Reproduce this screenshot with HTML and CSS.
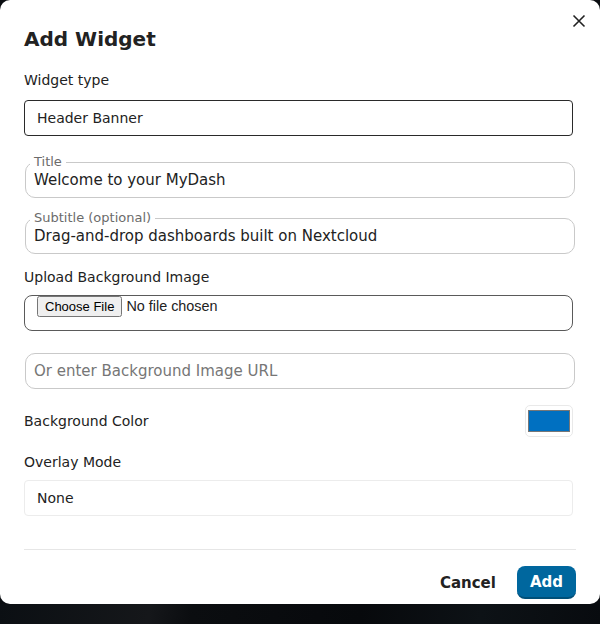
FILE: index.html
```html
<!DOCTYPE html>
<html>
<head>
<meta charset="utf-8">
<link rel="stylesheet" href="styles.css">
</head>
<body>
<div class="dialog">
  <button class="close" aria-label="Close">
    <svg width="14" height="14" viewBox="0 0 14 14"><path d="M1.5 1.5 L12.5 12.5 M12.5 1.5 L1.5 12.5" stroke="#222" stroke-width="1.6" fill="none"/></svg>
  </button>
  <h2 class="title">Add Widget</h2>

  <div class="field first">
    <label class="label">Widget type</label>
    <div class="select dark">Header Banner</div>
  </div>

  <fieldset class="outlined">
    <legend>Title</legend>
    <input class="plain" type="text" value="Welcome to your MyDash">
  </fieldset>

  <fieldset class="outlined second">
    <legend>Subtitle (optional)</legend>
    <input class="plain" type="text" value="Drag-and-drop dashboards built on Nextcloud">
  </fieldset>

  <div class="field upload">
    <label class="label">Upload Background Image</label>
    <div class="filebox"><input class="file" type="file"></div>
  </div>

  <div class="urlbox">
    <input class="plain" type="text" placeholder="Or enter Background Image URL">
  </div>

  <div class="color-row">
    <span class="label-inline">Background Color</span>
    <span class="swatch"><span class="swatch-fill"></span></span>
  </div>

  <div class="field overlay">
    <label class="label">Overlay Mode</label>
    <div class="select light">None</div>
  </div>

  <div class="footer">
    <button class="btn cancel">Cancel</button>
    <button class="btn add">Add</button>
  </div>
</div>
<div class="backdrop-strip"></div>
</body>
</html>
```

FILE: styles.css
```css
html, body {
  margin: 0;
  padding: 0;
}
body {
  background: #0a0d11;
  font-family: "DejaVu Sans", "Noto Sans", sans-serif;
  color: #222222;
  width: 600px;
  height: 624px;
  overflow: hidden;
}
.dialog {
  position: relative;
  box-sizing: border-box;
  width: 600px;
  height: 604px;
  background: #ffffff;
  border-radius: 10px;
  padding: 26px 24px 5px;
  display: flex;
  flex-direction: column;
}
.backdrop-strip {
  height: 20px;
  background: linear-gradient(100deg, #0b0f13 0%, #15171a 25%, #0b0d10 32%, #07090c 60%, #0d1216 80%, #080b0f 100%);
}
.close {
  position: absolute;
  left: 572px;
  top: 14px;
  width: 14px;
  height: 14px;
  padding: 0;
  margin: 0;
  border: none;
  background: transparent;
  display: block;
}
.close svg { display: block; }
.title {
  margin: 0;
  font-size: 20px;
  line-height: 26px;
  font-weight: bold;
  color: #222222;
}
.field { display: flex; flex-direction: column; }
.field.first { margin-top: 18px; }
.label {
  font-size: 14px;
  line-height: 20px;
  color: #222222;
  margin-bottom: 10px;
}
.select {
  box-sizing: border-box;
  width: 549px;
  height: 36px;
  border-radius: 4px;
  padding: 0 12px;
  font-size: 14px;
  line-height: 34px;
  color: #222222;
}
.select.dark { border: 1px solid #2a2a2a; }
.select.light { border: 1px solid #ececec; }

.outlined {
  box-sizing: border-box;
  width: 550px;
  margin: 18px 0 0 1px;
  padding: 0 4px 7px;
  border: 1px solid #c9c9c9;
  border-radius: 10px;
  min-width: 0;
}
.outlined.second { margin-top: 12px; }
.outlined legend {
  font-size: 13px;
  line-height: 16px;
  color: #6b6b6b;
  padding: 0 4px;
  margin: 0;
}
.plain {
  display: block;
  box-sizing: border-box;
  width: 100%;
  border: none;
  outline: none;
  padding: 0 4px;
  margin: 0;
  height: 20px;
  font-family: "DejaVu Sans", "Noto Sans", sans-serif;
  font-size: 15px;
  line-height: 20px;
  color: #222222;
  background: transparent;
}
.plain::placeholder { color: #767676; }

.field.upload { margin-top: 13px; }
.field.upload .label { margin-bottom: 8px; }
.filebox {
  box-sizing: border-box;
  width: 549px;
  height: 36px;
  border: 1px solid #5a5a5a;
  border-radius: 8px;
  padding: 0 12px;
}
.file {
  display: block;
  margin: 0;
  font-size: 14.4px;
}
.file::file-selector-button {
  font-size: 13px;
}

.urlbox {
  box-sizing: border-box;
  width: 550px;
  height: 36px;
  margin: 22px 0 0 1px;
  border: 1px solid #c9c9c9;
  border-radius: 10px;
  padding: 7px 4px;
}

.color-row {
  margin-top: 16px;
  display: flex;
  align-items: center;
  justify-content: space-between;
  width: 549px;
  height: 32px;
}
.label-inline {
  font-size: 14px;
  line-height: 20px;
}
.swatch {
  box-sizing: border-box;
  width: 48px;
  height: 32px;
  border: 1px solid #e9e9e9;
  border-radius: 5px;
  display: flex;
  align-items: center;
  justify-content: center;
}
.swatch-fill {
  box-sizing: border-box;
  width: 42px;
  height: 22px;
  background: #0070c1;
  border: 1px solid #777777;
}

.field.overlay { margin-top: 15px; }
.field.overlay .label { margin-bottom: 8px; }

.footer {
  margin-top: 33px;
  border-top: 1px solid #e6e6e6;
  padding-top: 16px;
  display: flex;
  justify-content: flex-end;
  gap: 9px;
}
.btn {
  font-family: "DejaVu Sans", "Noto Sans", sans-serif;
  font-size: 15px;
  font-weight: bold;
  height: 33px;
  border-radius: 8px;
  border: none;
  padding: 0 12px;
  margin: 0;
  cursor: pointer;
}
.cancel {
  background: transparent;
  color: #222222;
}
.add {
  background: #00679e;
  color: #ffffff;
  border-bottom: 2px solid #004f78;
  padding: 0 13px;
}
```
